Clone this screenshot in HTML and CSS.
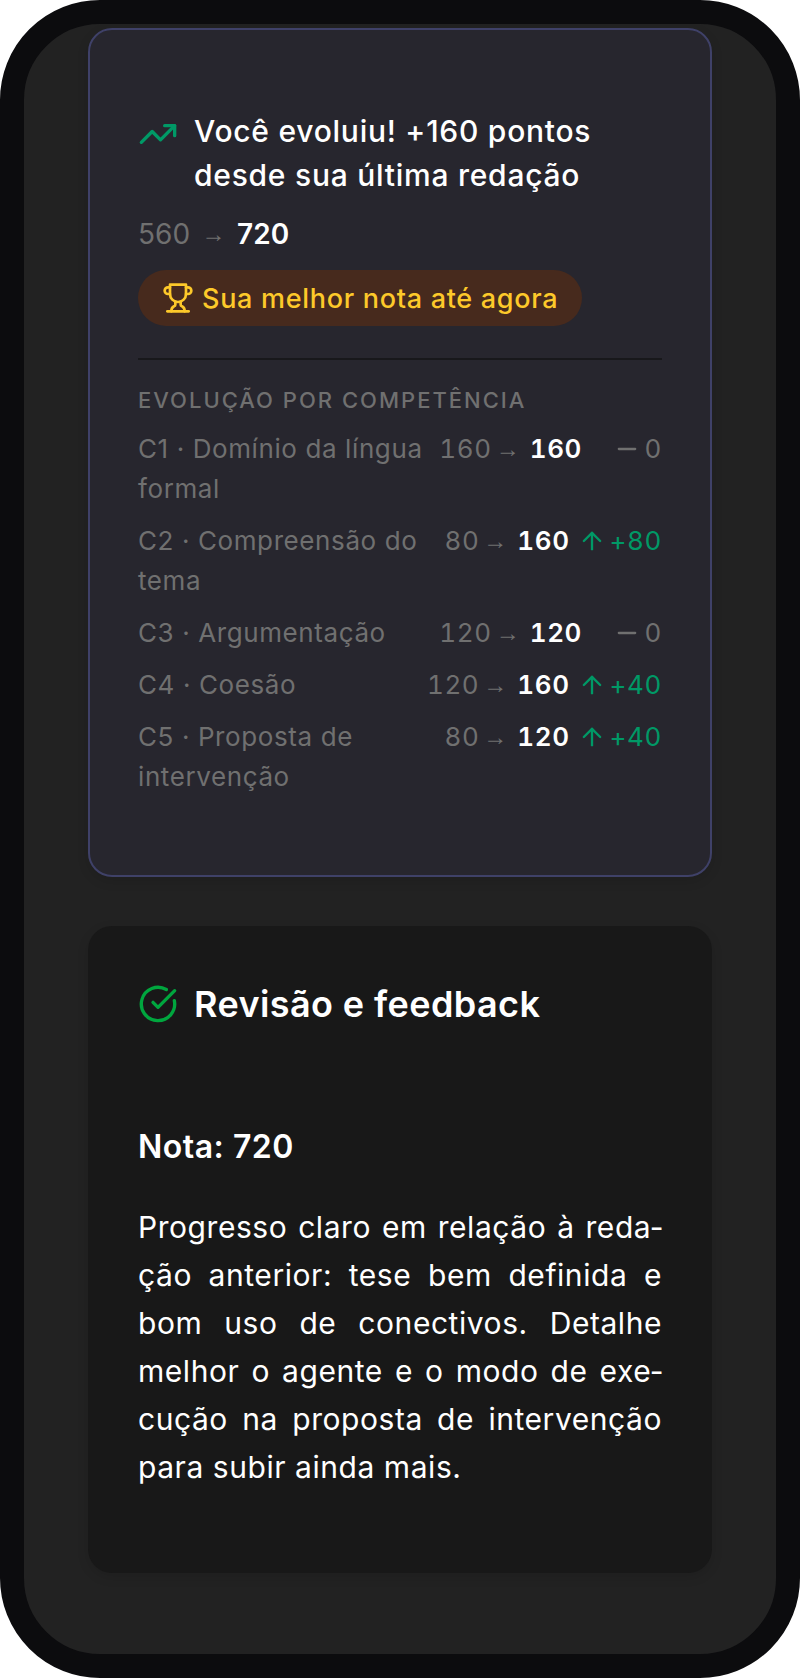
FILE: index.html
```html
<!DOCTYPE html>
<html lang="pt-BR">
<head>
<meta charset="utf-8">
<title>Revisão da redação</title>
<link rel="stylesheet" href="styles.css">
</head>
<body>
<div class="device">
  <main class="screen">
    <section class="card card-progress">
      <header class="heading">
        <svg class="icon icon-trend" viewBox="0 0 24 24"><path d="M16 7h6v6"/><path d="m22 7-8.5 8.5-5-5L2 17"/></svg>
        <h2 class="progress-title">Você evoluiu! +160 pontos desde sua última redação</h2>
      </header>
      <p class="score"><span class="old">560</span><span class="arrow">→</span><strong>720</strong></p>
      <div class="badge">
        <svg class="icon icon-trophy" viewBox="0 0 24 24"><path d="M6 9H4.5a2.5 2.5 0 0 1 0-5H6"/><path d="M18 9h1.5a2.5 2.5 0 0 0 0-5H18"/><path d="M4 22h16"/><path d="M10 14.66V17c0 .55-.47.98-.97 1.21C7.85 18.75 7 20.24 7 22"/><path d="M14 14.66V17c0 .55.47.98.97 1.21C16.15 18.75 17 20.24 17 22"/><path d="M18 2H6v7a6 6 0 0 0 12 0V2Z"/></svg>
        <span>Sua melhor nota até agora</span>
      </div>
      <div class="competencies">
        <h3 class="eyebrow">EVOLUÇÃO POR COMPETÊNCIA</h3>
        <ul class="rows">
          <li class="row">
            <span class="label">C1 · Domínio da língua formal</span>
            <span class="values"><span class="old">160</span><span class="small-arrow">→</span><strong>160</strong><span class="delta flat"><svg class="icon icon-delta" viewBox="0 0 24 24"><path d="M5 12h14"/></svg>0</span></span>
          </li>
          <li class="row">
            <span class="label">C2 · Compreensão do tema</span>
            <span class="values"><span class="old">80</span><span class="small-arrow">→</span><strong>160</strong><span class="delta up"><svg class="icon icon-delta" viewBox="0 0 24 24"><path d="m5 12 7-7 7 7"/><path d="M12 19V5"/></svg>+80</span></span>
          </li>
          <li class="row">
            <span class="label">C3 · Argumentação</span>
            <span class="values"><span class="old">120</span><span class="small-arrow">→</span><strong>120</strong><span class="delta flat"><svg class="icon icon-delta" viewBox="0 0 24 24"><path d="M5 12h14"/></svg>0</span></span>
          </li>
          <li class="row">
            <span class="label">C4 · Coesão</span>
            <span class="values"><span class="old">120</span><span class="small-arrow">→</span><strong>160</strong><span class="delta up"><svg class="icon icon-delta" viewBox="0 0 24 24"><path d="m5 12 7-7 7 7"/><path d="M12 19V5"/></svg>+40</span></span>
          </li>
          <li class="row">
            <span class="label">C5 · Proposta de intervenção</span>
            <span class="values"><span class="old">80</span><span class="small-arrow">→</span><strong>120</strong><span class="delta up"><svg class="icon icon-delta" viewBox="0 0 24 24"><path d="m5 12 7-7 7 7"/><path d="M12 19V5"/></svg>+40</span></span>
          </li>
        </ul>
      </div>
    </section>

    <section class="card card-review">
      <header class="heading heading-review">
        <svg class="icon icon-check" viewBox="0 0 24 24"><path d="M21.801 10A10 10 0 1 1 17 3.335"/><path d="m9 11 3 3L22 4"/></svg>
        <h2 class="review-title">Revisão e feedback</h2>
      </header>
      <p class="grade">Nota: 720</p>
      <p class="feedback">Progresso claro em relação à reda&shy;ção anterior: tese bem definida e bom uso de conectivos. Detalhe melhor o agente e o modo de exe&shy;cução na proposta de intervenção para subir ainda mais.</p>
    </section>
  </main>
</div>
</body>
</html>
```
FILE: styles.css
```css
* {
  box-sizing: border-box;
}

html,
body {
  margin: 0;
  padding: 0;
  background: #fff;
}

body {
  font-family: Inter, "Liberation Sans", sans-serif;
  color: #fff;
}

h2,
h3,
p,
ul {
  margin: 0;
  padding: 0;
}

ul {
  list-style: none;
}

.device {
  width: 800px;
  height: 1678px;
  border: 24px solid #0c0c0e;
  border-radius: 100px;
  background: #222;
  overflow: hidden;
}

.screen {
  display: flex;
  flex-direction: column;
  gap: 49px;
  padding: 4px 64px 0;
}

.card {
  border-radius: 24px;
  box-shadow: 0 4px 12px rgba(0, 0, 0, 0.12);
}

.card-progress {
  background: #27262e;
  border: 2px solid #3f4168;
  padding: 79px 48px 78px;
  height: 849px;
}

.card-review {
  background: #181818;
  height: 647px;
  padding: 54px 50px 0;
}

.icon {
  flex: none;
  fill: none;
  stroke: currentColor;
  stroke-width: 2;
  stroke-linecap: round;
  stroke-linejoin: round;
}

.heading {
  display: flex;
  align-items: flex-start;
  gap: 16px;
}

.icon-trend {
  width: 40px;
  height: 40px;
  margin-top: 5px;
  color: #009966;
}

.progress-title {
  font-size: 30px;
  line-height: 44px;
  font-weight: 500;
  letter-spacing: 0.75px;
}

.score {
  display: flex;
  align-items: center;
  margin-top: 15px;
  font-size: 28px;
  line-height: 44px;
}

.score .old {
  color: #707070;
}

.score .arrow {
  width: 47px;
  text-align: center;
  color: #707070;
  font-family: "Liberation Sans", sans-serif;
  font-size: 24px;
}

.score strong {
  font-weight: 600;
}

.badge {
  display: inline-flex;
  align-items: center;
  gap: 8px;
  height: 56px;
  margin-top: 14px;
  padding: 0 24px;
  border-radius: 28px;
  background: #472a1d;
  color: #fdc92a;
  font-size: 27px;
  font-weight: 500;
  letter-spacing: 0.7px;
}

.icon-trophy {
  width: 32px;
  height: 32px;
}

.competencies {
  margin-top: 32px;
  padding-top: 24px;
  border-top: 2px solid #18181b;
}

.eyebrow {
  font-size: 22px;
  line-height: 32px;
  font-weight: 500;
  letter-spacing: 2px;
  color: #707070;
}

.rows {
  display: flex;
  flex-direction: column;
  gap: 12px;
  margin-top: 13px;
}

.row {
  display: flex;
  align-items: flex-start;
  gap: 12px;
  font-size: 26px;
  line-height: 40px;
  letter-spacing: 0.6px;
}

.label {
  flex: 1;
  color: #707070;
}

.values {
  display: flex;
  align-items: center;
  flex: none;
  color: #707070;
  font-variant-numeric: tabular-nums;
}

.small-arrow {
  width: 38px;
  padding-left: 4px;
  font-family: "Liberation Sans", sans-serif;
  font-size: 24px;
}

.values strong {
  color: #fff;
  font-weight: 600;
}

.delta {
  display: flex;
  align-items: center;
  justify-content: flex-end;
  min-width: 72px;
  margin-left: 8px;
}

.delta.up {
  color: #009966;
}

.icon-delta {
  width: 28px;
  height: 28px;
  margin-right: 4px;
}

.icon-check {
  width: 40px;
  height: 40px;
  color: #00a63e;
}

.heading-review {
  align-items: center;
}

.review-title {
  font-size: 36px;
  line-height: 48px;
  font-weight: 600;
  letter-spacing: 0.4px;
}

.grade {
  margin-top: 97px;
  font-size: 32px;
  line-height: 44px;
  font-weight: 600;
  letter-spacing: 0.5px;
}

.feedback {
  margin-top: 34px;
  font-size: 30px;
  line-height: 48px;
  letter-spacing: 0.55px;
  text-align: justify;
  color: #fff;
}
```
